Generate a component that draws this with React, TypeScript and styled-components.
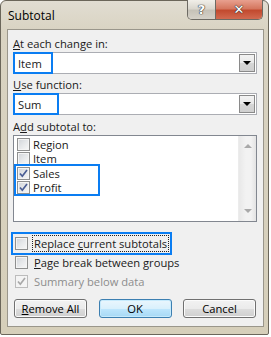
import React from 'react';
import styled, { createGlobalStyle } from 'styled-components';

const GlobalStyle = createGlobalStyle`
  html, body {
    margin: 0;
    padding: 0;
    background: #ffffff;
  }
  body {
    font-family: 'Open Sans', 'Noto Sans', 'DejaVu Sans', sans-serif;
    font-size: 11.2px;
    color: #1a1a1a;
  }
`;

const Window = styled.div`
  box-sizing: border-box;
  width: 269px;
  height: 335px;
  display: flex;
  flex-direction: column;
  background: linear-gradient(180deg, #e1ddd2 0px, #d9d3c2 30px, #d6cfba 100%);
  border: 1px solid #6b665a;
  border-radius: 6px 6px 2px 2px;
  padding: 0 4px 7px 6px;
`;

const TitleBar = styled.div`
  height: 28px;
  display: flex;
  justify-content: space-between;
  align-items: flex-start;
`;

const Title = styled.span`
  margin-top: 6px;
  padding-left: 1px;
  font-size: 12px;
  color: #000;
`;

const CaptionButtons = styled.div`
  display: flex;
  margin-top: -1px;
  margin-right: 1px;
  border: 1px solid #6d6a63;
  border-top: none;
  border-radius: 0 0 5px 5px;
  overflow: hidden;
`;

const CaptionButton = styled.div<{ $close?: boolean }>`
  height: 19px;
  width: ${(p) => (p.$close ? '46px' : '27px')};
  display: flex;
  align-items: center;
  justify-content: center;
  font-family: 'DejaVu Sans', sans-serif;
  font-weight: bold;
  font-size: 13px;
  color: #fff;
  text-shadow: 0 0 1px #333, 0 0 1px #333, 0 0 1px #333;
  background: ${(p) =>
    p.$close
      ? 'linear-gradient(180deg, #e8a08f 0%, #d5775f 45%, #c24a2f 55%, #d26a50 100%)'
      : 'linear-gradient(180deg, #f1efe9 0%, #dad7ce 45%, #c6c2b8 55%, #d5d1c8 100%)'};
  border-left: ${(p) => (p.$close ? '1px solid #6d6a63' : 'none')};
`;

const Panel = styled.div`
  flex: 1;
  display: flex;
  flex-direction: column;
  background: #f0f0f0;
  border: 1px solid #9a968b;
  padding: 7px 6px 8px 5px;
`;

const Label = styled.div<{ $gap?: number }>`
  line-height: 14px;
  margin-top: ${(p) => p.$gap ?? 0}px;
  color: #1a1a1a;
`;

const Key = styled.span`
  text-decoration: underline;
`;

const Combo = styled.div`
  box-sizing: border-box;
  margin-top: 1px;
  height: 22px;
  width: 244px;
  display: flex;
  align-items: center;
  justify-content: space-between;
  background: #fff;
  border: 1px solid #abadb3;
  padding-right: 1px;
`;

const ComboValue = styled.span<{ $width: number }>`
  display: flex;
  align-items: center;
  width: ${(p) => p.$width}px;
  height: 18px;
  padding-left: 3px;
  outline: 2px solid #0a7df2;
  margin-left: 1px;
`;

const DropButton = styled.div`
  box-sizing: border-box;
  width: 16px;
  height: 18px;
  display: flex;
  align-items: center;
  justify-content: center;
  border: 1px solid #8a8a8a;
  background: linear-gradient(180deg, #f3f3f3 0%, #e8e8e8 50%, #d6d6d6 51%, #cfcfcf 100%);
`;

const ArrowDown = styled.span`
  width: 0;
  height: 0;
  border-left: 4px solid transparent;
  border-right: 4px solid transparent;
  border-top: 4px solid #000;
`;

const ListBox = styled.div`
  box-sizing: border-box;
  margin-top: 1px;
  width: 244px;
  height: 87px;
  display: flex;
  background: #fff;
  border: 1px solid #828790;
`;

const ListItems = styled.div`
  flex: 1;
  padding: 1px 0 0 2px;
`;

const ListGroup = styled.div`
  width: 82px;
  margin-top: 1px;
  outline: 2px solid #0a7df2;
`;

const ListRow = styled.div`
  height: 14px;
  display: flex;
  align-items: center;
  gap: 3px;
  padding-left: 1px;
`;

const ScrollBar = styled.div`
  width: 17px;
  display: flex;
  flex-direction: column;
  justify-content: space-between;
  align-items: center;
  background: linear-gradient(90deg, #e8e8e8, #f2f2f2 40%, #f2f2f2 70%, #e3e3e3);
  border-left: 1px solid #ececec;
  padding: 8px 0;
`;

const ScrollArrow = styled.span<{ $up?: boolean }>`
  width: 0;
  height: 0;
  border-left: 4px solid transparent;
  border-right: 4px solid transparent;
  ${(p) => (p.$up ? 'border-bottom: 4px solid #a9a9a9;' : 'border-top: 4px solid #a9a9a9;')}
`;

const Options = styled.div`
  margin-top: 12px;
  display: flex;
  flex-direction: column;
  align-items: flex-start;
`;

const OptionRow = styled.div<{ $focus?: boolean; $disabled?: boolean }>`
  height: 19px;
  display: flex;
  align-items: center;
  gap: 4px;
  padding-left: 2px;
  padding-right: 1px;
  white-space: nowrap;
  outline: ${(p) => (p.$focus ? '2px solid #0a7df2' : 'none')};
  color: ${(p) => (p.$disabled ? '#8d8d8d' : '#1a1a1a')};
`;

const FocusText = styled.span<{ $focus?: boolean }>`
  border: 1px dotted ${(p) => (p.$focus ? '#222' : 'transparent')};
  padding: 0 1px;
  line-height: 15px;
`;

const Box = styled.span<{ $disabled?: boolean }>`
  box-sizing: border-box;
  flex: none;
  width: 13px;
  height: 13px;
  display: flex;
  align-items: center;
  justify-content: center;
  border: 1px solid ${(p) => (p.$disabled ? '#bcbcbc' : '#8e8f8f')};
  background: ${(p) =>
    p.$disabled
      ? '#f4f4f4'
      : 'linear-gradient(135deg, #d0d3d8 0%, #e6e8ea 50%, #f8f8f8 100%)'};
  box-shadow: inset 0 0 0 1px #f4f4f4;
`;

const ButtonRow = styled.div`
  margin-top: 8px;
  display: flex;
  justify-content: space-between;
  padding: 0 1px 0 1px;
  width: 242px;
`;

const Button = styled.div<{ $default?: boolean }>`
  box-sizing: border-box;
  width: 73px;
  height: 19px;
  display: flex;
  align-items: center;
  justify-content: center;
  border: 1px solid ${(p) => (p.$default ? '#3c7fb1' : '#707070')};
  border-radius: 3px;
  color: #000;
  background: ${(p) =>
    p.$default
      ? 'linear-gradient(180deg, #eaf6fd 0%, #d9f0fc 50%, #bee6fd 51%, #a7d9f5 100%)'
      : 'linear-gradient(180deg, #f2f2f2 0%, #ebebeb 50%, #dddddd 51%, #cfcfcf 100%)'};
  box-shadow: inset 0 0 0 1px ${(p) => (p.$default ? '#c6eafc' : '#fbfbfb')};
`;

const Check = ({ color }: { color: string }) => (
  <svg width="9" height="9" viewBox="0 0 9 9">
    <path d="M1 4.5 L3.3 7.2 L8 1" fill="none" stroke={color} strokeWidth="1.7" />
  </svg>
);

const CheckBox = ({ checked, disabled }: { checked?: boolean; disabled?: boolean }) => (
  <Box $disabled={disabled}>{checked && <Check color={disabled ? '#a8a8a8' : '#4a5d94'} />}</Box>
);

const fields = [
  { name: 'Region', checked: false },
  { name: 'Item', checked: false },
];
const picked = [
  { name: 'Sales', checked: true },
  { name: 'Profit', checked: true },
];

const App = () => {
  return (
    <>
      <GlobalStyle />
      <Window>
        <TitleBar>
          <Title>Subtotal</Title>
          <CaptionButtons>
            <CaptionButton>?</CaptionButton>
            <CaptionButton $close>✕</CaptionButton>
          </CaptionButtons>
        </TitleBar>
        <Panel>
          <Label>
            <Key>A</Key>t each change in:
          </Label>
          <Combo>
            <ComboValue $width={33}>Item</ComboValue>
            <DropButton>
              <ArrowDown />
            </DropButton>
          </Combo>
          <Label $gap={4}>
            <Key>U</Key>se function:
          </Label>
          <Combo>
            <ComboValue $width={39}>Sum</ComboValue>
            <DropButton>
              <ArrowDown />
            </DropButton>
          </Combo>
          <Label $gap={5}>
            A<Key>d</Key>d subtotal to:
          </Label>
          <ListBox>
            <ListItems>
              {fields.map((f) => (
                <ListRow key={f.name}>
                  <CheckBox checked={f.checked} />
                  {f.name}
                </ListRow>
              ))}
              <ListGroup>
                {picked.map((f) => (
                  <ListRow key={f.name}>
                    <CheckBox checked={f.checked} />
                    {f.name}
                  </ListRow>
                ))}
              </ListGroup>
            </ListItems>
            <ScrollBar>
              <ScrollArrow $up />
              <ScrollArrow />
            </ScrollBar>
          </ListBox>
          <Options>
            <OptionRow $focus>
              <CheckBox />
              <FocusText $focus>
                Replace <Key>c</Key>urrent subtotals
              </FocusText>
            </OptionRow>
            <OptionRow>
              <CheckBox />
              <FocusText>
                <Key>P</Key>age break between groups
              </FocusText>
            </OptionRow>
            <OptionRow $disabled>
              <CheckBox checked disabled />
              <FocusText>Summary below data</FocusText>
            </OptionRow>
          </Options>
          <ButtonRow>
            <Button>
              <span>
                <Key>R</Key>emove All
              </span>
            </Button>
            <Button $default>OK</Button>
            <Button>Cancel</Button>
          </ButtonRow>
        </Panel>
      </Window>
    </>
  );
};

export default App;
